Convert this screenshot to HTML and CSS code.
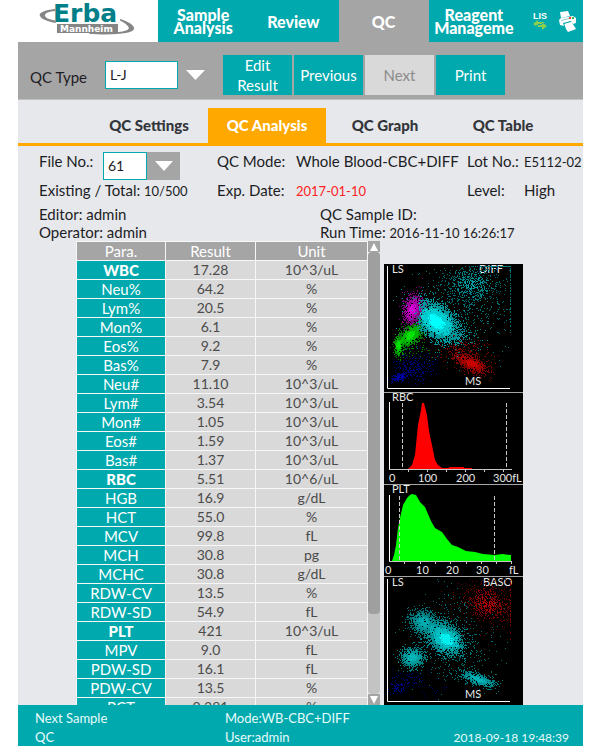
FILE: index.html
```html
<!DOCTYPE html>
<html lang="en">
<head>
<meta charset="utf-8">
<meta name="viewport" content="width=device-width, initial-scale=1">
<title>QC Analysis</title>
<link rel="stylesheet" href="styles.css">
</head>
<body>
<div class="app">
  <header class="nav">
    <svg class="logo" viewBox="0 0 140 42" role="img" aria-label="Erba Mannheim">
      <path d="M37 9C27 10 20 13 22 16C23 19 30 21.500 38 23L37 20.500C31 19.500 27 17.500 27 15.500C27 13 31 11.500 37 11Z" fill="#858585"/>
      <path d="M102 19C111 21.500 117 26 116 29C115 33 99 35.500 72 34L71 33C94 33.500 108 32 110.500 29C112 27 108 23.500 102 20.500Z" fill="#858585"/>
      <rect x="39" y="24" width="61" height="9" fill="#858585"/>
      <text class="logo-name" x="35" y="22">Erba</text>
      <text class="logo-city" x="42" y="32">Mannheim</text>
    </svg>
    <nav class="nav-links">
      <a class="nav-link" href="#analysis">Sample<br>Analysis</a>
      <a class="nav-link" href="#review">Review</a>
      <a class="nav-link nav-link-active" href="#qc">QC</a>
      <a class="nav-link" href="#reagent"><span>Reagent<br>Manageme</span></a>
    </nav>
    <div class="status">
      <svg class="status-icon" width="14" height="18" viewBox="0 0 14 18" role="img" aria-label="LIS">
        <text class="lis-text" x="0" y="7">LIS</text>
        <path d="M0 12L5 8V10H11V12H5V15.500ZM14 14L9 10.500V13H3V15H9V18Z" fill="#8ccf4d"/>
      </svg>
      <svg class="status-icon" width="18" height="22" viewBox="0 0 18 22" role="img" aria-label="Printer">
        <path d="M1 2L9 1L11 6L2 8Z" fill="#fff"/>
        <path d="M0 10L2 8L14 6L17 8V13L14 14L12 11L4 13L5 16L1 15Z" fill="#fff"/>
        <path d="M2 10.500L10 8.500" stroke="#8ec9cc"/>
        <path d="M5 13L12 11L17 19L9 22L7 19Z" fill="#fff"/>
        <path d="M5 13.500L12 11.500" stroke="#00a9ad" fill="none"/>
        <rect x="10" y="7" width="2" height="2" fill="#ee3b3b"/>
        <rect x="13" y="7" width="2" height="2" fill="#36b649"/>
      </svg>
    </div>
  </header>

  <div class="toolbar">
    <label class="toolbar-label" for="qc-type">QC Type</label>
    <select class="field type-field" id="qc-type"><option>L-J</option></select>
    <svg class="type-arrow" width="20" height="10" viewBox="0 0 20 10" aria-hidden="true"><path d="M0 0H19L9.500 10Z" fill="#fff"/></svg>
    <div class="actions">
      <button class="action" type="button">Edit Result</button>
      <button class="action" type="button">Previous</button>
      <button class="action" type="button" disabled>Next</button>
      <button class="action" type="button">Print</button>
    </div>
  </div>

  <nav class="tabs">
    <a class="tab" href="#settings">QC Settings</a>
    <a class="tab tab-active" href="#qc-analysis">QC Analysis</a>
    <a class="tab" href="#graph">QC Graph</a>
    <a class="tab" href="#table">QC Table</a>
  </nav>

  <main class="content">
    <section class="info">
      <div class="info-top">
        <div class="file-row">
          <label for="file-no">File No.:</label>
          <select class="field file-field" id="file-no"><option>61</option></select>
          <span class="file-arrow"><svg width="18" height="10" viewBox="0 0 18 10" aria-hidden="true"><path d="M0 0H18L9 10Z" fill="#fff"/></svg></span>
        </div>
        <div class="pair"><span>QC Mode:</span><span>Whole Blood-CBC+DIFF</span></div>
        <div class="pair lot"><span>Lot No.:</span><span class="figures">E5112-02</span></div>
        <div>Existing / Total: <span class="figures">10/500</span></div>
        <div class="pair"><span>Exp. Date:</span><span class="figures expired">2017-01-10</span></div>
        <div class="pair lot"><span>Level:</span><span>High</span></div>
      </div>
      <div class="info-bottom">
        <div>Editor: admin</div><div>QC Sample ID:</div>
        <div>Operator: admin</div><div>Run Time: <span class="figures">2016-11-10 16:26:17</span></div>
      </div>
    </section>

    <section class="results">
      <div class="table-area">
        <div class="table-clip">
          <table class="data">
            <colgroup><col class="col-para"><col class="col-result"><col class="col-unit"></colgroup>
            <thead><tr><th>Para.</th><th>Result</th><th>Unit</th></tr></thead>
            <tbody>
              <tr class="group"><th>WBC</th><td>17.28</td><td>10^3/uL</td></tr>
              <tr><th>Neu%</th><td>64.2</td><td>%</td></tr>
              <tr><th>Lym%</th><td>20.5</td><td>%</td></tr>
              <tr><th>Mon%</th><td>6.1</td><td>%</td></tr>
              <tr><th>Eos%</th><td>9.2</td><td>%</td></tr>
              <tr><th>Bas%</th><td>7.9</td><td>%</td></tr>
              <tr><th>Neu#</th><td>11.10</td><td>10^3/uL</td></tr>
              <tr><th>Lym#</th><td>3.54</td><td>10^3/uL</td></tr>
              <tr><th>Mon#</th><td>1.05</td><td>10^3/uL</td></tr>
              <tr><th>Eos#</th><td>1.59</td><td>10^3/uL</td></tr>
              <tr><th>Bas#</th><td>1.37</td><td>10^3/uL</td></tr>
              <tr class="group"><th>RBC</th><td>5.51</td><td>10^6/uL</td></tr>
              <tr><th>HGB</th><td>16.9</td><td>g/dL</td></tr>
              <tr><th>HCT</th><td>55.0</td><td>%</td></tr>
              <tr><th>MCV</th><td>99.8</td><td>fL</td></tr>
              <tr><th>MCH</th><td>30.8</td><td>pg</td></tr>
              <tr><th>MCHC</th><td>30.8</td><td>g/dL</td></tr>
              <tr><th>RDW-CV</th><td>13.5</td><td>%</td></tr>
              <tr><th>RDW-SD</th><td>54.9</td><td>fL</td></tr>
              <tr class="group"><th>PLT</th><td>421</td><td>10^3/uL</td></tr>
              <tr><th>MPV</th><td>9.0</td><td>fL</td></tr>
              <tr><th>PDW-SD</th><td>16.1</td><td>fL</td></tr>
              <tr><th>PDW-CV</th><td>13.5</td><td>%</td></tr>
              <tr><th>PCT</th><td>0.381</td><td>%</td></tr>
            </tbody>
          </table>
        </div>
        <div class="scrollbar" aria-hidden="true">
          <span class="scroll-end"><svg width="8" height="8" viewBox="0 0 8 8"><path d="M4 0L8 8H0Z" fill="#fff"/></svg></span>
          <span class="scroll-track"><span class="scroll-thumb"></span></span>
          <span class="scroll-end"><svg width="8" height="8" viewBox="0 0 8 8"><path d="M0 0H8L4 8Z" fill="#fff"/></svg></span>
        </div>
      </div>

      <div class="charts">
        <svg class="chart" viewBox="0 0 139 128" role="img" aria-label="DIFF scattergram">
          <text x="8" y="9">LS</text><text x="95" y="9">DIFF</text>
          <g id="diff-dots"></g>
          <path class="axis" d="M3.500 2V124.500H126"/>
          <text x="81" y="121">MS</text>
        </svg>
        <svg class="chart" viewBox="0 0 139 91" role="img" aria-label="RBC histogram">
          <path fill="#f00" d="M24 76L28 72L31 62L34 32L37 17L38 10H40L43 22L45 38L48 52L51 67L54 72L58 75L65 75V74H80V75H88V76Z"/>
          <path class="axis" d="M5.500 9V76"/>
          <path class="base" d="M5 76.500H128M24.500 76V79M43.500 76V79M62.500 76V79M81.500 76V79M100.500 76V79M119.500 76V79"/>
          <path class="limit" d="M18.500 10V76M122.500 10V76"/>
          <text x="8" y="8">RBC</text>
          <text x="5" y="89">0</text><text x="34" y="89">100</text><text x="72" y="89">200</text><text x="109" y="89">300fL</text>
        </svg>
        <svg class="chart" viewBox="0 0 139 91" role="img" aria-label="PLT histogram">
          <path fill="#0f0" d="M8 76L10 70L12 60L14 43L16 33L19 20L23 13L26 10L28 9L32 10L36 17L41 22L44 29L47 36L51 43L58 47L63 54L68 60L74 62L82 66L91 67L99 69L111 70L118 69L127 70V76Z"/>
          <path class="axis" d="M5.500 10V76"/>
          <path class="base" d="M5 76.500H128M20.500 76V79M36.500 76V79M51.500 76V79M66.500 76V79M82.500 76V79M97.500 76V79M112.500 76V79M127.500 76V79"/>
          <path class="limit" d="M15.500 11V76M110.500 11V76"/>
          <text x="8" y="8">PLT</text>
          <text x="1" y="89">0</text><text x="32" y="89">10</text><text x="62" y="89">20</text><text x="92" y="89">30</text><text x="125" y="89">fL</text>
        </svg>
        <svg class="chart" viewBox="0 0 139 128" role="img" aria-label="BASO scattergram">
          <text x="8" y="9">LS</text><text x="99" y="9">BASO</text>
          <g id="baso-dots"></g>
          <path class="axis" d="M3.500 2V124.500H126"/>
          <text x="81" y="121">MS</text>
        </svg>
      </div>
    </section>
  </main>

  <footer class="footer">
    <span>Next Sample</span><span>Mode:WB-CBC+DIFF</span><span></span>
    <span>QC</span><span>User:admin</span><time>2018-09-18 19:48:39</time>
  </footer>
</div>
<script src="charts.js"></script>
</body>
</html>
```
FILE: styles.css
```css
* { box-sizing: border-box; }
body {
  margin: 0;
  background: #fff;
  color: #1d1d24;
  font-family: Lato, "Liberation Sans", sans-serif;
  font-size: 15px;
  line-height: 18px;
}
a { color: inherit; text-decoration: none; }
button, select { font: inherit; }
svg { display: block; }

.app {
  display: flex;
  flex-direction: column;
  height: calc(100vh - 7px);
  margin: 0 14px 0 18px;
  background: #e6e8ec;
}

.nav { display: flex; height: 42px; flex: none; background: #00a9ad; color: #fff; }
.logo { width: 140px; height: 42px; flex: none; background: #fff; }
.logo-name { font: bold 25px "DejaVu Sans", sans-serif; fill: #007f88; }
.logo-city { font: bold 9px "DejaVu Sans", sans-serif; fill: #fff; }
.nav-links { display: grid; grid-template-columns: repeat(4, minmax(0, 1fr)); flex: 1; }
.nav-link {
  display: flex;
  align-items: center;
  justify-content: center;
  min-width: 0;
  overflow: hidden;
  font-size: 16px;
  font-weight: 900;
  line-height: 13px;
  text-align: center;
}
.nav-link-active { background: #a5a5a5; }
.status { display: flex; align-items: center; justify-content: space-between; flex: none; width: 64px; padding: 0 6px 0 14px; }
.status-icon { flex: none; }
.lis-text { font: bold 9px "Liberation Sans", sans-serif; fill: #fff; }

.toolbar {
  display: flex;
  align-items: center;
  height: 58px;
  flex: none;
  padding: 8px 12px 0 12px;
  background: #a5a5a5;
  border-bottom: 1px solid #c0c1c5;
}
.toolbar-label { width: 75px; padding-top: 4px; }
.field {
  appearance: none;
  height: 28px;
  margin: 0;
  padding: 0 4px;
  border: 1px solid #00a9ad;
  border-radius: 0;
  background: #fff;
  color: #1d1d24;
  font-size: 14px;
}
.type-field { width: 73px; }
.type-arrow { margin: 0 17px 0 8px; }
.actions { display: grid; grid-template-columns: repeat(4, 69px); gap: 2px; }
.action {
  height: 40px;
  padding: 0;
  border: 0;
  background: #00a9ad;
  color: #fff;
  font-size: 15px;
  line-height: 20px;
}
.action:disabled { background: #d9d9d9; color: #8b8b8b; }

.tabs {
  display: grid;
  grid-template-columns: repeat(4, minmax(0, 118px));
  flex: none;
  padding: 8px 0 0 72px;
  border-bottom: 3px solid #ffa800;
}
.tab { color: #33353a; font-weight: 900; line-height: 35px; text-align: center; }
.tab-active { background: #ffa800; color: #fff; }

.content { display: flex; flex-direction: column; flex: 1; min-height: 0; }
.info { flex: none; padding: 6px 0 0 21px; overflow: hidden; white-space: nowrap; }
.info-top { display: grid; grid-template-columns: 178px 250px 1fr; grid-template-rows: 29px 18px; }
.file-row { display: flex; }
.file-row label { width: 64px; }
.file-field { width: 44px; }
.file-arrow { display: grid; place-items: center; width: 33px; height: 28px; background: #a5a5a5; }
.pair { display: grid; grid-template-columns: 79px 1fr; align-items: baseline; }
.pair.lot { grid-template-columns: 57px 1fr; }
.figures { font-size: 13px; line-height: 14px; }
.expired { color: #f22; }
.info-bottom { display: grid; grid-template-columns: 281px 1fr; padding-top: 6px; }

.results {
  display: grid;
  grid-template-columns: minmax(0, 1fr) 139px;
  grid-template-rows: minmax(0, 1fr);
  gap: 4px;
  flex: 1;
  min-height: 0;
  padding: 0 60px 0 58px;
}
.table-area { display: grid; grid-template-columns: 1fr 12px; min-height: 0; grid-template-rows: minmax(0, 1fr); }
.table-clip { overflow: hidden; }
.data { width: 100%; border-collapse: collapse; table-layout: fixed; color: #4b4b4b; }
.col-para { width: 89px; }
.col-result { width: 90px; }
.data th, .data td {
  height: 19px;
  padding: 0;
  border: 1px solid #f7f7f8;
  background: #d9d9d9;
  font-weight: 400;
  line-height: 18px;
  text-align: center;
}
.data td { font-size: 14px; }
.data th { background: #00a9ad; color: #fff; }
.data thead th { background: #a5a5a5; }
.data .group th { font-weight: 900; }
.scrollbar { display: flex; flex-direction: column; background: #e6e8ec; }
.scroll-end { display: grid; place-items: center; height: 11px; background: #a5a5a5; }
.scroll-track { flex: 1; border-radius: 4px; background: #c3c3c3; }
.scroll-thumb { display: block; height: 82%; border-radius: 4px; background: #9f9f9f; }

.charts { display: flex; flex-direction: column; gap: 1px; align-self: end; background: #a5a5a5; }
.chart { width: 100%; background: #000; }
.chart text { font-size: 11px; fill: #e8e8e8; }
.axis { fill: none; stroke: #fff; }
.base { fill: none; stroke: #c8c8c8; }
.limit { fill: none; stroke: #c8c8c8; stroke-dasharray: 4 2; }
.dots { fill: none; shape-rendering: crispEdges; }

.footer {
  display: grid;
  grid-template-columns: 190px 1fr auto;
  flex: none;
  padding: 4px 14px 0 17px;
  background: #00a9ad;
  color: #e9fbfb;
  font-size: 13px;
  line-height: 19px;
  height: 41px;
}
.footer time { font-size: 12px; }
```
FILE: charts.js
```js
let seed = 7;
function random() {
  seed = (seed * 1664525 + 1013904223) % 4294967296;
  return (seed + 1) / 4294967297;
}

// cluster: [cx, cy, spreadX, spreadY, tilt, count, coreColor, midColor, edgeColor]
function drawClusters(id, clusters) {
  const layers = new Map();
  const add = (color, x, y) => {
    if (x < 4 || x > 126 || y < 2 || y > 122) return;
    layers.set(color, (layers.get(color) || "") + `M${x} ${y + 0.5}h1`);
  };
  for (const [cx, cy, sx, sy, tilt, count, core, mid, edge] of clusters) {
    for (let i = 0; i < count; i++) {
      const r = Math.sqrt(-2 * Math.log(random()));
      const a = 2 * Math.PI * random();
      const u = r * Math.cos(a);
      const v = r * Math.sin(a);
      const noise = r + random() * 0.7;
      const color = noise < 0.9 ? core : noise < 1.7 ? mid : edge;
      add(color, Math.round(cx + u * sx), Math.round(cy + v * sy + u * tilt));
    }
  }
  const order = [...layers.keys()].sort((a, b) => parseInt(a.slice(1), 16) - parseInt(b.slice(1), 16));
  document.getElementById(id).innerHTML = order
    .map((color) => `<path class="dots" stroke="${color}" d="${layers.get(color)}"/>`)
    .join("");
}

function edgeCluster(x, y, sx, sy, count, color) {
  return [x, y, sx, sy, 0, count, color, color, color];
}

drawClusters("diff-dots", [
  edgeCluster(80, 38, 24, 24, 480, "#007074"),
  [88, 20, 14, 10, 0, 560, "#00a2a6", "#008488", "#006266"],
  edgeCluster(113, 2, 11, 0, 90, "#007c80"),
  edgeCluster(126, 24, 0, 22, 70, "#006a6e"),
  edgeCluster(67, 70, 14, 7, 220, "#007c80"),
  [52, 57, 10, 8, 4, 4400, "#00ffff", "#00cdd0", "#009a9e"],
  [28, 45, 5, 7, -2, 760, "#d800d8", "#a800a8", "#780078"],
  [26, 71, 6, 5, -3, 1200, "#00e600", "#00b400", "#007c00"],
  [14, 81, 2, 5, 0, 360, "#00e600", "#00c000", "#008c00"],
  edgeCluster(35, 87, 12, 4, 40, "#007c00"),
  [15, 113, 4, 2, -1, 170, "#0000b4", "#000096", "#000078"],
  edgeCluster(29, 102, 10, 8, 260, "#000078"),
  [87, 99, 8, 4, 3, 950, "#c80000", "#a00000", "#780000"],
  edgeCluster(79, 87, 14, 6, 170, "#780000")
]);

drawClusters("baso-dots", [
  edgeCluster(68, 60, 18, 24, 330, "#006a6e"),
  edgeCluster(90, 80, 16, 22, 120, "#006a6e"),
  [39, 45, 7, 6, 1, 950, "#00aaae", "#008c90", "#006e72"],
  [53, 54, 10, 7, 3, 1100, "#00b4b8", "#009a9e", "#007c80"],
  [62, 62, 8, 7, 2, 1900, "#00f0f0", "#00bec2", "#008c90"],
  [28, 80, 6, 5, 0, 950, "#00b4b8", "#009a9e", "#007c80"],
  [94, 102, 9, 3, 3, 620, "#00b4b8", "#009a9e", "#007c80"],
  [104, 26, 11, 9, 2, 560, "#b00000", "#880000", "#640000"],
  edgeCluster(96, 22, 18, 14, 110, "#5a0000"),
  edgeCluster(126, 28, 0, 17, 60, "#780000"),
  edgeCluster(13, 111, 4, 3, 60, "#00008c"),
  edgeCluster(22, 102, 10, 5, 70, "#000069"),
  edgeCluster(45, 109, 14, 6, 20, "#000069")
]);
```
